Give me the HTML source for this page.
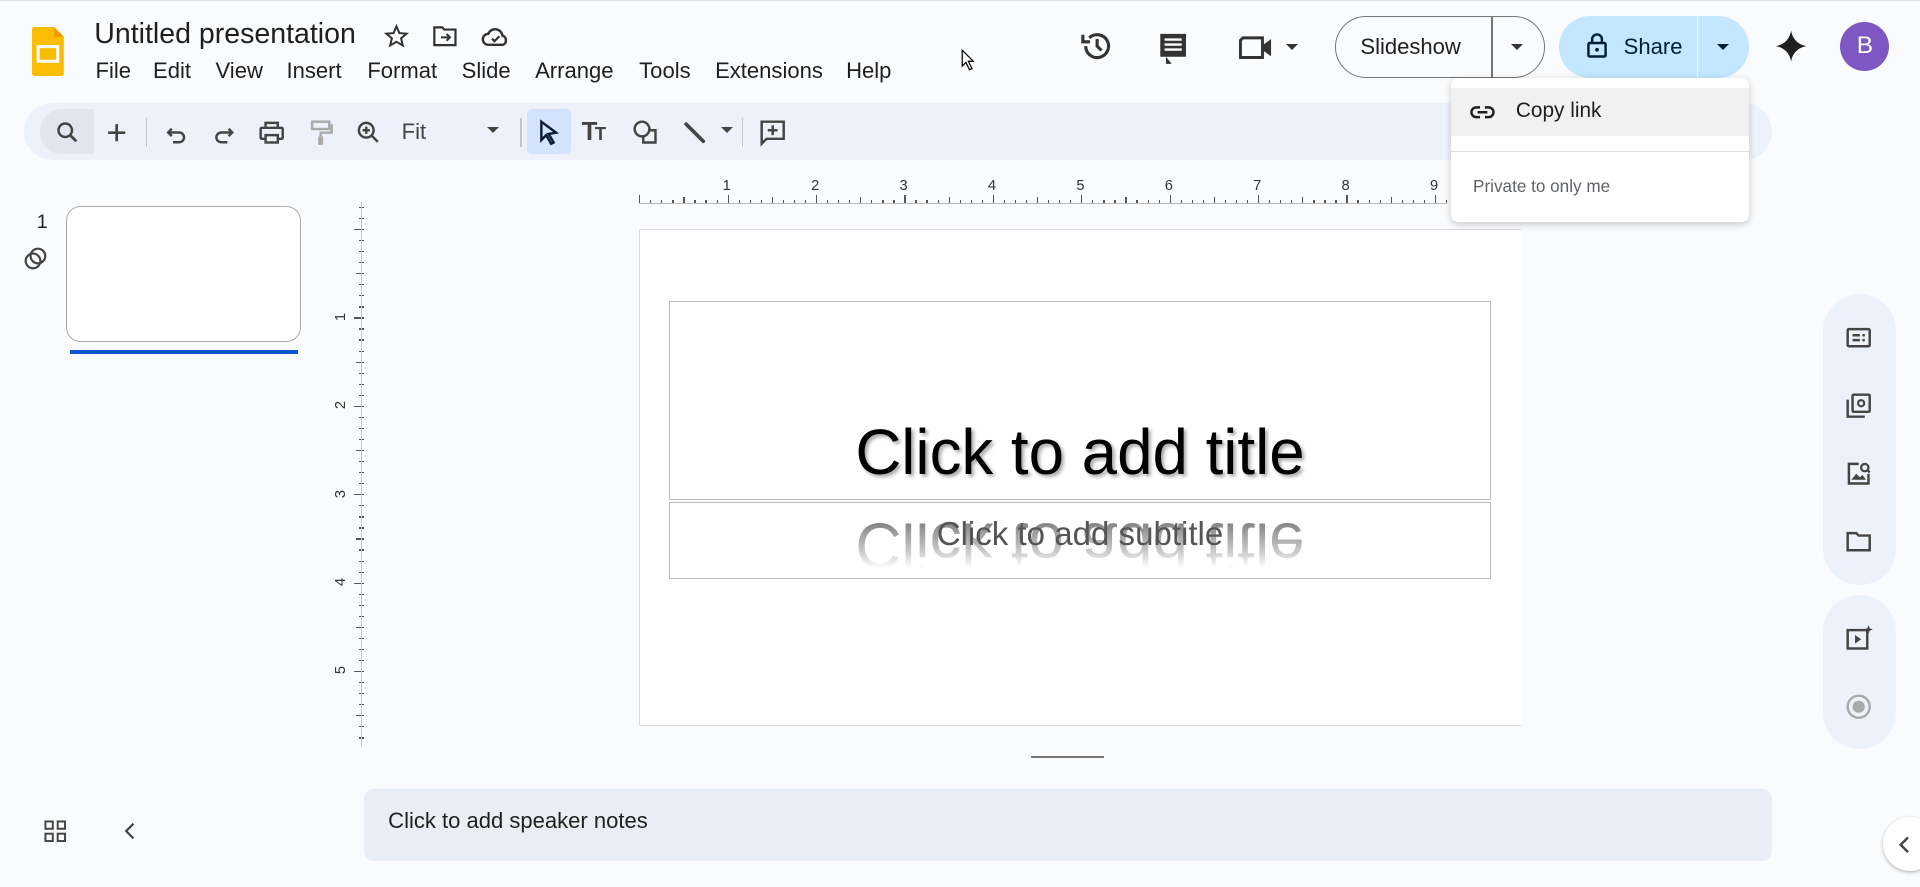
<!DOCTYPE html>
<html><head><meta charset="utf-8"><style>
*{box-sizing:border-box;margin:0;padding:0}
html,body{width:1920px;height:887px;overflow:hidden;background:#f9fbfd}
#w{position:relative;width:1568px;height:724px;zoom:1.22449;font-family:"Liberation Sans",Arial,sans-serif;color:#1f1f1f;background:#f9fbfd}
.a{position:absolute}
.menu span{position:absolute;top:0;font-size:18px;white-space:nowrap}
svg{display:block}
.ic{position:absolute;width:24px;height:24px}
</style></head><body><div id="w">
<div class="a" style="left:0;top:0;width:1568px;height:1px;background:#dde1e6"></div>
<svg class="a" style="left:26px;top:22px" width="26" height="40" viewBox="0 0 26 40"><path d="M2 0h16l8 8v30a2 2 0 0 1-2 2H2a2 2 0 0 1-2-2V2a2 2 0 0 1 2-2z" fill="#fbbc04"/><path d="M18 0l8 8h-8z" fill="#f29900"/><rect x="5" y="16" width="16" height="12" fill="none" stroke="#fff" stroke-width="2.5"/></svg>
<div class="a" style="left:77px;top:15px;font-size:23.3px;color:#1f1f1f;white-space:nowrap">Untitled presentation</div>
<svg class="a" style="left:313px;top:19px" width="22" height="22" viewBox="0 0 24 24"><path d="M12 3l2.6 6 6.4.5-4.9 4.2 1.5 6.3L12 16.7 6.4 20l1.5-6.3L3 9.5 9.4 9z" fill="none" stroke="#333" stroke-width="1.8"/></svg>
<svg class="a" style="left:353px;top:20px" width="22" height="20" viewBox="0 0 24 22"><path d="M2 3h7l2 2h10v14H2z" fill="none" stroke="#333" stroke-width="2"/><path d="M8 12h8m-3-3l3 3-3 3" fill="none" stroke="#333" stroke-width="1.8"/></svg>
<svg class="a" style="left:393px;top:20px" width="24" height="20" viewBox="0 0 24 20"><path d="M6 17a4.5 4.5 0 0 1 0-9 6 6 0 0 1 11.5 1.5A4 4 0 0 1 18 17z" fill="none" stroke="#333" stroke-width="2"/><path d="M9 12l2 2 4-4" fill="none" stroke="#333" stroke-width="1.8"/></svg>
<div class="a menu" style="left:0;top:47px;width:800px;height:24px"><span style="left:78px">File</span><span style="left:125px">Edit</span><span style="left:176px">View</span><span style="left:234px">Insert</span><span style="left:300px">Format</span><span style="left:377px">Slide</span><span style="left:437px">Arrange</span><span style="left:522px">Tools</span><span style="left:584px">Extensions</span><span style="left:691px">Help</span></div>
<svg class="a" style="left:882px;top:24px" width="28" height="28" viewBox="0 0 24 24"><path d="M4 12a8 8 0 1 0 2.5-5.8" fill="none" stroke="#333" stroke-width="2.2"/><path d="M2 4v5h5" fill="none" stroke="#333" stroke-width="2.2"/><path d="M12 7v5l3 3" fill="none" stroke="#333" stroke-width="2.2"/></svg>
<svg class="a" style="left:944px;top:25px" width="28" height="28" viewBox="0 0 24 24"><path d="M3 2h18v16H7l4 5-4 0V18H3z" fill="#333"/><path d="M6 6h12M6 9.5h12M6 13h12" stroke="#fff" stroke-width="1.6"/></svg>
<svg class="a" style="left:1011px;top:27px" width="32" height="24" viewBox="0 0 32 24"><path d="M4 4h16v16H2V6z" fill="none" stroke="#333" stroke-width="2.4"/><path d="M20 10l7-5v14l-7-5z" fill="#333"/></svg>
<div class="a" style="left:1050px;top:36px;border:5px solid transparent;border-top-color:#333;border-bottom:0"></div>
<div class="a" style="left:1090px;top:13px;width:172px;height:51px;border:1px solid #747775;border-radius:26px"></div>
<div class="a" style="left:1218px;top:13px;width:1px;height:51px;background:#747775"></div>
<div class="a" style="left:1111px;top:28px;font-size:18px;color:#1f1f1f">Slideshow</div>
<div class="a" style="left:1234px;top:36px;border:5px solid transparent;border-top-color:#333;border-bottom:0"></div>
<div class="a" style="left:1273px;top:13px;width:155px;height:51px;background:#c2e7ff;border-radius:26px"></div>
<div class="a" style="left:1386px;top:13px;width:1px;height:51px;background:#f9fbfd"></div>
<svg class="a" style="left:1295px;top:26px" width="18" height="22" viewBox="0 0 18 22"><rect x="2" y="9" width="14" height="11" rx="1" fill="none" stroke="#001d35" stroke-width="2"/><path d="M5 9V6a4 4 0 0 1 8 0v3" fill="none" stroke="#001d35" stroke-width="2"/><circle cx="9" cy="14.5" r="1.5" fill="#001d35"/></svg>
<div class="a" style="left:1326px;top:28px;font-size:18px;color:#001d35">Share</div>
<div class="a" style="left:1402px;top:36px;border:5px solid transparent;border-top-color:#001d35;border-bottom:0"></div>
<svg class="a" style="left:1449px;top:24px" width="28" height="28" viewBox="0 0 24 24"><path d="M12 1C12.8 7 17 11.2 23 12 17 12.8 12.8 17 12 23 11.2 17 7 12.8 1 12 7 11.2 11.2 7 12 1z" fill="#1f1f1f"/></svg>
<div class="a" style="left:1503px;top:18px;width:40px;height:40px;border-radius:50%;background:#7e57c2;color:#fff;font-size:20px;text-align:center;line-height:40px">B</div>
<div class="a" style="left:20px;top:84px;width:1427px;height:47px;background:#edf2fa;border-radius:24px"></div>
<div class="a" style="left:33px;top:89px;width:44px;height:37px;background:#e1e6ee;border-radius:18px 0 0 18px"></div>
<svg class="ic" style="left:43px;top:96px" viewBox="0 0 24 24"><circle cx="10" cy="10" r="5.5" fill="none" stroke="#444" stroke-width="2"/><path d="M14 14l5 5" stroke="#444" stroke-width="2.2"/></svg>
<svg class="ic" style="left:83px;top:96px" viewBox="0 0 24 24"><path d="M12 5v14M5 12h14" stroke="#444" stroke-width="2.2"/></svg>
<div class="a" style="left:119px;top:96px;width:1px;height:24px;background:#c4c7c5"></div>
<svg class="ic" style="left:132px;top:97px" viewBox="0 0 24 24"><path d="M8 8l-3 3 3 3M5 11h9a4 4 0 0 1 0 8h-5" fill="none" stroke="#444" stroke-width="2"/></svg>
<svg class="ic" style="left:171px;top:97px" viewBox="0 0 24 24"><path d="M16 8l3 3-3 3M19 11h-9a4 4 0 0 0 0 8h5" fill="none" stroke="#444" stroke-width="2"/></svg>
<svg class="ic" style="left:210px;top:96px" viewBox="0 0 24 24"><path d="M7 8V4h10v4" fill="none" stroke="#444" stroke-width="2"/><rect x="3" y="8" width="18" height="9" rx="1" fill="none" stroke="#444" stroke-width="2"/><rect x="7" y="14" width="10" height="6" fill="#edf2fa" stroke="#444" stroke-width="2"/></svg>
<svg class="ic" style="left:250px;top:96px" viewBox="0 0 24 24"><rect x="5" y="3" width="14" height="6" fill="none" stroke="#aaa" stroke-width="2"/><path d="M19 6h2v6h-9v3" fill="none" stroke="#aaa" stroke-width="2"/><rect x="10" y="15" width="4" height="7" fill="#aaa"/></svg>
<svg class="ic" style="left:289px;top:96px" viewBox="0 0 24 24"><circle cx="10" cy="10" r="6" fill="none" stroke="#444" stroke-width="2"/><path d="M14.5 14.5l5 5M10 7v6M7 10h6" stroke="#444" stroke-width="2"/></svg>
<div class="a" style="left:328px;top:97px;font-size:18px;color:#444">Fit</div>
<div class="a" style="left:398px;top:104px;border:5px solid transparent;border-top-color:#444;border-bottom:0"></div>
<div class="a" style="left:425px;top:96px;width:1px;height:24px;background:#c4c7c5"></div>
<div class="a" style="left:430px;top:89px;width:36px;height:37px;background:#d3e3fd;border-radius:4px"></div>
<svg class="ic" style="left:436px;top:96px" viewBox="0 0 24 24"><path d="M6 3l12 9-6 1 4 7-2 1-4-7-4 4z" fill="none" stroke="#0b1c3a" stroke-width="2"/></svg>
<div class="a" style="left:475px;top:96px;font-size:21px;font-weight:bold;color:#444;letter-spacing:-2px">T<span style="font-size:15px">T</span></div>
<svg class="ic" style="left:515px;top:96px" viewBox="0 0 24 24"><circle cx="9" cy="9" r="6" fill="none" stroke="#444" stroke-width="2"/><path d="M15 10h5v10H10v-5" fill="none" stroke="#444" stroke-width="2"/></svg>
<svg class="ic" style="left:555px;top:96px" viewBox="0 0 24 24"><path d="M5 5l14 14" stroke="#444" stroke-width="3" stroke-linecap="round"/></svg>
<div class="a" style="left:589px;top:104px;border:5px solid transparent;border-top-color:#444;border-bottom:0"></div>
<div class="a" style="left:606px;top:96px;width:1px;height:24px;background:#c4c7c5"></div>
<svg class="ic" style="left:619px;top:96px" viewBox="0 0 24 24"><path d="M3 3h18v14H7l-4 4z" fill="none" stroke="#444" stroke-width="2"/><path d="M12 6v8M8 10h8" stroke="#444" stroke-width="2"/></svg>
<div class="a" style="left:30px;top:172px;font-size:16px">1</div>
<svg class="a" style="left:18px;top:200px" width="22" height="22" viewBox="0 0 22 22"><circle cx="9" cy="13" r="6" fill="none" stroke="#444" stroke-width="1.8"/><circle cx="13" cy="9" r="6" fill="none" stroke="#444" stroke-width="1.8"/></svg>
<div class="a" style="left:54px;top:168px;width:192px;height:111px;background:#fff;border:1px solid #aaa;border-radius:12px"></div>
<div class="a" style="left:57px;top:286px;width:186px;height:3px;background:#0b57d0"></div>
<svg class="a" style="left:35px;top:669px" width="20" height="20" viewBox="0 0 20 20"><g fill="none" stroke="#444" stroke-width="1.6"><rect x="2" y="2" width="6" height="6"/><rect x="12" y="2" width="6" height="6"/><rect x="2" y="12" width="6" height="6"/><rect x="12" y="12" width="6" height="6"/></g></svg>
<svg class="a" style="left:98px;top:670px" width="16" height="18" viewBox="0 0 16 18"><path d="M11 3L5 9l6 6" fill="none" stroke="#444" stroke-width="1.8"/></svg>
<div id="rt" class="a" style="left:522px;top:145px;width:660px;height:22px"></div>
<div id="rl" class="a" style="left:273px;top:165px;width:24px;height:445px"></div>
<div class="a" style="left:295px;top:165px;width:1px;height:445px;background:#c4c7c5"></div>
<div class="a" style="left:522px;top:187px;width:720px;height:406px;background:#fff;border:1px solid #dadce0;border-right:0"></div>
<div class="a" style="left:546px;top:246px;width:672px;height:162px;border:1px solid #bbb"></div>
<div class="a" style="left:546px;top:410px;width:672px;height:63px;border:1px solid #bbb"></div>
<div class="a" style="left:546px;top:340px;width:672px;text-align:center;font-size:52px;line-height:60px;color:#000;text-shadow:2px 2px 3px rgba(0,0,0,.35)">Click to add title</div>
<div class="a" style="left:546px;top:420px;width:672px;height:44px;overflow:hidden;-webkit-mask-image:linear-gradient(to bottom,rgba(0,0,0,.85),rgba(0,0,0,.3) 70%,transparent)"><div style="text-align:center;font-size:52px;line-height:60px;color:#555;transform:scaleY(-1);margin-top:-5px">Click to add title</div></div>
<div class="a" style="left:546px;top:421px;width:672px;text-align:center;font-size:27px;color:#555">Click to add subtitle</div>
<div class="a" style="left:842px;top:617px;width:60px;height:2px;background:#777"></div>
<div class="a" style="left:297px;top:644px;width:1150px;height:59px;background:#e9eef6;border-radius:8px"></div>
<div class="a" style="left:317px;top:660px;font-size:18px;color:#1f1f1f">Click to add speaker notes</div>
<div class="a" style="left:1489px;top:240px;width:59px;height:238px;background:#edf2fa;border-radius:30px"></div>
<div class="a" style="left:1489px;top:486px;width:59px;height:126px;background:#edf2fa;border-radius:30px"></div>
<svg class="ic" style="left:1506px;top:264px" viewBox="0 0 24 24"><rect x="3" y="5" width="18" height="14" rx="1" fill="none" stroke="#444" stroke-width="2"/><path d="M7 10h6M7 14h6M15 10h2M15 14h2" stroke="#444" stroke-width="2"/></svg>
<svg class="ic" style="left:1506px;top:319px" viewBox="0 0 24 24"><rect x="7" y="3" width="14" height="14" rx="1" fill="none" stroke="#444" stroke-width="2"/><path d="M3 7v14h14" fill="none" stroke="#444" stroke-width="2"/><circle cx="14" cy="10" r="2.5" fill="none" stroke="#444" stroke-width="1.8"/></svg>
<svg class="ic" style="left:1506px;top:375px" viewBox="0 0 24 24"><path d="M12 4H4v16h16v-8" fill="none" stroke="#444" stroke-width="2"/><path d="M6 17l4-5 3 3 2-2 3 4z" fill="#444"/><circle cx="17" cy="7" r="3" fill="none" stroke="#444" stroke-width="1.8"/><path d="M19 9l2 2" stroke="#444" stroke-width="1.8"/></svg>
<svg class="ic" style="left:1506px;top:430px" viewBox="0 0 24 24"><path d="M3 5h7l2 2h9v12H3z" fill="none" stroke="#444" stroke-width="2"/></svg>
<svg class="ic" style="left:1506px;top:510px" viewBox="0 0 24 24"><rect x="3" y="5" width="16" height="15" fill="none" stroke="#444" stroke-width="2"/><path d="M9 9l5 3.5L9 16z" fill="#444"/><path d="M20 1l1 2.5 2.5 1-2.5 1-1 2.5-1-2.5-2.5-1 2.5-1z" fill="#444"/></svg>
<svg class="ic" style="left:1506px;top:565px" viewBox="0 0 24 24"><circle cx="12" cy="12" r="9" fill="none" stroke="#aaa" stroke-width="2"/><circle cx="12" cy="12" r="5" fill="#aaa"/></svg>
<div class="a" style="left:1538px;top:667px;width:44px;height:44px;border-radius:50%;background:#fff;box-shadow:0 1px 3px rgba(0,0,0,.3)"></div>
<svg class="a" style="left:1549px;top:682px" width="12" height="16" viewBox="0 0 12 16"><path d="M9 2L3 8l6 6" fill="none" stroke="#444" stroke-width="2"/></svg>
<svg class="a" style="left:785px;top:40px" width="12" height="18" viewBox="0 0 12 18"><path d="M1 1v13l3-3 3 6 2-1-3-6h4z" fill="#fff" stroke="#000"/></svg>
<div class="a" style="left:1185px;top:64px;width:243px;height:117px;background:#fff;border-radius:6px;box-shadow:0 2px 6px rgba(0,0,0,.2)"></div>
<div class="a" style="left:1185px;top:72px;width:243px;height:39px;background:#f1f1f1"></div>
<svg class="a" style="left:1200px;top:82px" width="22" height="20" viewBox="0 0 22 20"><path d="M9 6H6a4 4 0 0 0 0 8h3M13 6h3a4 4 0 0 1 0 8h-3M7 10h8" fill="none" stroke="#1f1f1f" stroke-width="2"/></svg>
<div class="a" style="left:1238px;top:81px;font-size:17px;color:#1f1f1f">Copy link</div>
<div class="a" style="left:1185px;top:123px;width:243px;height:1px;background:#ddd"></div>
<div class="a" style="left:1203px;top:144px;font-size:14px;color:#5f6368">Private to only me</div>
<script>
(function(){
var rt=document.getElementById('rt'),s='';
var u=72.2;
for(var i=0;i<=84;i++){var x=i*u/8;if(x>660)break;var h=i%8==0?8:(i%4==0?6:4);
s+='<div style="position:absolute;left:'+x+'px;bottom:0;width:1px;height:'+h+'px;background:#555"></div>';
if(i%8==0&&i>0)s+='<div style="position:absolute;left:'+(x-4)+'px;top:0;font-size:12px;color:#333">'+(i/8)+'</div>';}
s+='<div style="position:absolute;left:0;bottom:0;width:660px;height:1px;background:#bbb"></div>';
rt.innerHTML=s;
var rl=document.getElementById('rl');s='';
var y0=187-165;
for(var i=-2;i<=46;i++){var y=y0+i*u/8;if(y<0||y>445)continue;var h=(i%8==0)?8:(i%4==0?6:4);
s+='<div style="position:absolute;top:'+y+'px;right:0;height:1px;width:'+h+'px;background:#555"></div>';
if(i%8==0&&i>0)s+='<div style="position:absolute;top:'+(y-7)+'px;left:2px;font-size:12px;color:#333;transform:rotate(-90deg)">'+(i/8)+'</div>';}
rl.innerHTML=s;
})();
</script>
</div></body></html>
